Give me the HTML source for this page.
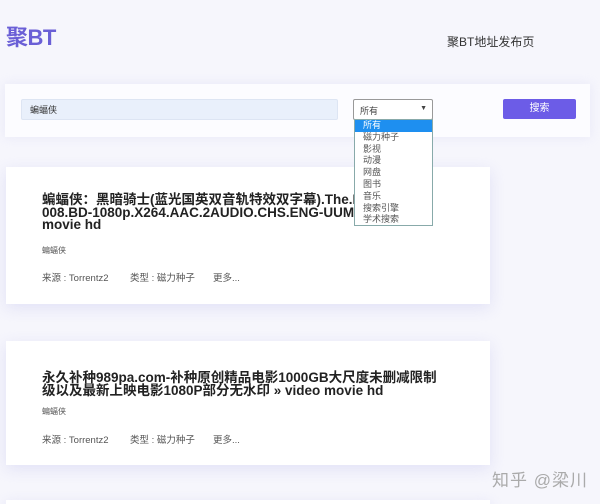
<!DOCTYPE html>
<html><head><meta charset="utf-8"><style>
*{margin:0;padding:0;box-sizing:border-box}
html,body{width:600px;height:504px;overflow:hidden}
body{background:#f6f6fc;font-family:"Liberation Sans","Noto Sans CJK SC",sans-serif;position:relative;color:#333}
.abs{position:absolute}
.logo{left:6px;top:20px;font-size:22px;font-weight:bold;color:#6a5fd6;letter-spacing:-0.5px}
.rt{left:447px;top:33px;font-size:12px;color:#333}
.panel{left:5px;top:84px;width:585px;height:53px;background:#fcfcff;box-shadow:0 0 10px rgba(200,200,240,.3)}
.inp{left:21px;top:99px;width:317px;height:21px;background:#e9f0fb;border:1px solid #dde5f3;border-radius:2px;font-size:9px;padding:3px 8px;color:#333}
.sel{left:353px;top:99px;width:80px;height:21px;background:#fff;border:1px solid #999;border-radius:2px;font-size:9px;padding:4px 6px;color:#444}
.sel span{position:absolute;right:5px;top:5px;font-size:7px}
.btn{left:503px;top:99px;width:73px;height:20px;background:#6c5ce7;border-radius:2px;color:#fff;font-size:10px;text-align:center;line-height:20px}
.dd{left:354px;top:119px;width:79px;height:107px;background:#fff;border:1px solid #8aa;font-size:9px;color:#555}
.dd div{height:11.8px;line-height:11.8px;padding-left:8px}
.dd .hl{background:#1e8ff0;color:#fff}
.card{left:6px;width:484px;background:#fff;box-shadow:0 4px 14px rgba(200,200,240,.45)}
.t{position:absolute;left:36px;font-size:13.5px;font-weight:bold;line-height:12.5px;color:#222;white-space:nowrap}
.s{position:absolute;left:36px;font-size:8px;color:#555}
.m{position:absolute;left:36px;font-size:9.5px;color:#555;white-space:nowrap}
.m b{font-weight:normal;display:inline-block}
.wm{left:492px;top:466px;font-size:17px;color:#aaa;letter-spacing:1px}
</style></head><body>
<div class="abs logo">聚BT</div>
<div class="abs rt">聚BT地址发布页</div>
<div class="abs panel"></div>
<div class="abs inp">蝙蝠侠</div>
<div class="abs sel">所有<span>▼</span></div>
<div class="abs btn">搜索</div>
<div class="abs card" style="top:167px;height:137px">
<div class="t" style="top:27px">蝙蝠侠：黑暗骑士(蓝光国英双音轨特效双字幕).The.Da<br>008.BD-1080p.X264.AAC.2AUDIO.CHS.ENG-UUM<br>movie hd</div>
<div class="s" style="top:78px">蝙蝠侠</div>
<div class="m" style="top:103px"><b style="width:88px">来源 : Torrentz2</b><b style="width:83px">类型 : 磁力种子</b>更多...</div>
</div>
<div class="abs dd"><div class="hl">所有</div><div>磁力种子</div><div>影视</div><div>动漫</div><div>网盘</div><div>图书</div><div>音乐</div><div>搜索引擎</div><div>学术搜索</div></div>
<div class="abs card" style="top:341px;height:124px">
<div class="t" style="top:31px">永久补种989pa.com-补种原创精品电影1000GB大尺度未删减限制<br>级以及最新上映电影1080P部分无水印 » video movie hd</div>
<div class="s" style="top:65px">蝙蝠侠</div>
<div class="m" style="top:91px"><b style="width:88px">来源 : Torrentz2</b><b style="width:83px">类型 : 磁力种子</b>更多...</div>
</div>
<div class="abs card" style="top:500px;height:20px"></div>
<div class="abs wm">知乎 @梁川</div>
</body></html>
